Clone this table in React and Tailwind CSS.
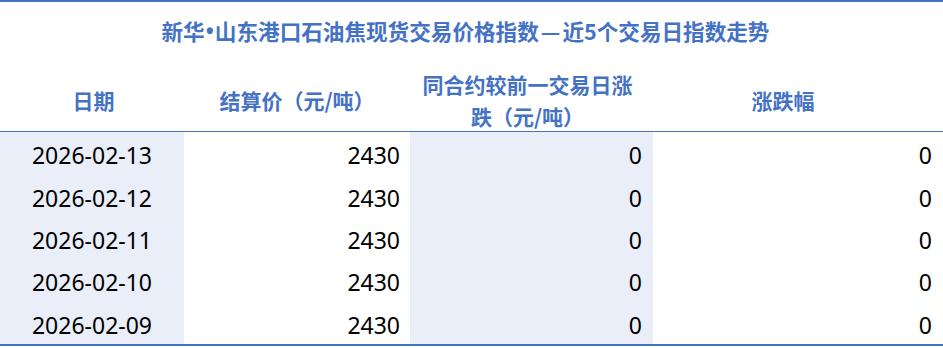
import React from "react";

const rows = [
  { date: "2026-02-13", price: "2430", change: "0", pct: "0" },
  { date: "2026-02-12", price: "2430", change: "0", pct: "0" },
  { date: "2026-02-11", price: "2430", change: "0", pct: "0" },
  { date: "2026-02-10", price: "2430", change: "0", pct: "0" },
  { date: "2026-02-09", price: "2430", change: "0", pct: "0" },
];

const cjk = {
  fontFamily: '"Noto Sans CJK SC", "Noto Sans", sans-serif',
};
const num = {
  fontFamily: '"Noto Sans", "Noto Sans CJK SC", sans-serif',
};

export default function App() {
  return (
    <div className="w-[943px] h-[348px] bg-white overflow-hidden" style={cjk}>
      <div className="border-t-2 border-b-2 border-[#4472c4]">
        {/* title */}
        <div className="h-[66px] pb-[8px] pr-[12px] flex items-center justify-center text-[21.6px] font-bold text-[#4472c4] leading-none">
          新华<span style={num} className="px-[1px]">•</span>山东港口石油焦现货交易价格指数
          <span className="px-[2px]">—</span>近5个交易日指数走势
        </div>

        {/* header */}
        <div className="grid grid-cols-[184px_226px_243px_1fr] h-[64px] border-b border-[#4472c4] text-[21px] font-bold text-[#4472c4] leading-[32px]">
          <div className="flex items-center justify-center pl-[3px]">日期</div>
          <div className="flex items-center justify-center">结算价（元/吨）</div>
          <div className="flex items-center justify-center text-center pr-[8px]">
            同合约较前一交易日涨
            <br />
            跌（元/吨）
          </div>
          <div className="flex items-center justify-center pr-[30px]">涨跌幅</div>
        </div>

        {/* body */}
        <div style={num} className="text-[23px] text-black leading-none">
          {rows.map((r) => (
            <div
              key={r.date}
              className="grid grid-cols-[184px_226px_243px_1fr] h-[42.4px]"
            >
              <div className="bg-[#e9eef9] flex items-center justify-center pt-[5px]">
                {r.date}
              </div>
              <div className="flex items-center justify-end pr-[10px] pt-[5px]">
                {r.price}
              </div>
              <div className="bg-[#e9eef9] flex items-center justify-end pr-[11px] pt-[5px]">
                {r.change}
              </div>
              <div className="flex items-center justify-end pr-[11px] pt-[5px]">
                {r.pct}
              </div>
            </div>
          ))}
        </div>
      </div>
    </div>
  );
}
